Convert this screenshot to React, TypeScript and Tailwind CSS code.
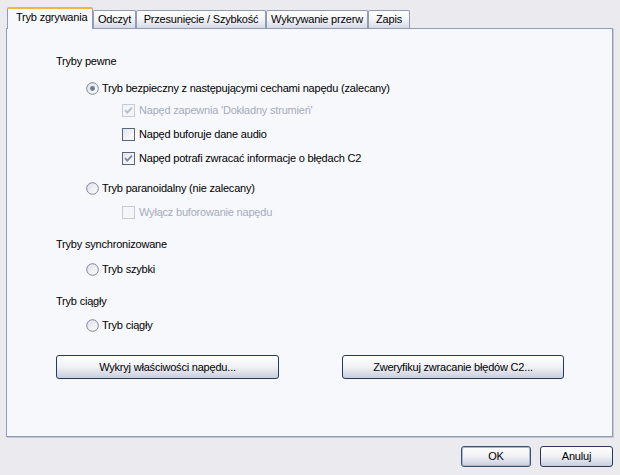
import React from "react";

function Radio({ checked }: { checked?: boolean }) {
  return (
    <svg width="13" height="13" viewBox="0 0 13 13" className="shrink-0">
      <defs>
        <linearGradient id="rg" x1="0" y1="0" x2="1" y2="1">
          <stop offset="0" stopColor="#dcdee6" />
          <stop offset="1" stopColor="#ffffff" />
        </linearGradient>
      </defs>
      <circle cx="6.5" cy="6.5" r="5.8" fill="url(#rg)" stroke="#7b8699" strokeWidth="1" />
      {checked && <circle cx="6.5" cy="6.5" r="2.4" fill="#6e7a8e" />}
    </svg>
  );
}

function Check({ checked, disabled }: { checked?: boolean; disabled?: boolean }) {
  const border = disabled ? "#c3cad8" : "#566680";
  const mark = disabled ? "#b6bdcb" : "#7d889e";
  return (
    <svg width="13" height="13" viewBox="0 0 13 13" className="shrink-0">
      <defs>
        <linearGradient id="cg" x1="0" y1="0" x2="1" y2="1">
          <stop offset="0" stopColor="#e2e4ec" />
          <stop offset="1" stopColor="#ffffff" />
        </linearGradient>
      </defs>
      <rect x="0.5" y="0.5" width="12" height="12" fill={disabled ? "#f4f5f9" : "url(#cg)"} stroke={border} />
      {checked && (
        <path d="M3 6.2l2.3 2.4 4.7-5" fill="none" stroke={mark} strokeWidth="1.8" />
      )}
    </svg>
  );
}

function Btn({ label, w, primary }: { label: string; w: string; primary?: boolean }) {
  return (
    <div
      className={`${w} flex items-center justify-center rounded-[3px] border ${
        primary ? "border-[#3c5274] shadow-[inset_0_0_0_1px_#a9b7cf]" : "border-[#263a5a]"
      } bg-gradient-to-b from-[#ffffff] via-[#f0f1f5] to-[#c9cede] text-black`}
    >
      {label}
    </div>
  );
}

export default function App() {
  const tabs = [
    { t: "Odczyt", w: "w-[43px]" },
    { t: "Przesunięcie / Szybkość", w: "w-[130px]" },
    { t: "Wykrywanie przerw", w: "w-[102px]" },
    { t: "Zapis", w: "w-[42px]" },
  ];

  return (
    <div
      className="w-[620px] h-[475px] bg-[#ebeaee] text-[11px] leading-[13px] tracking-[-0.2px] text-black overflow-hidden"
      style={{ fontFamily: "Tahoma, 'Liberation Sans', Arial, sans-serif" }}
    >
      {/* tabs */}
      <div className="flex items-end pl-[7px] pt-[7px] h-[28px]">
        <div className="relative z-10 h-[22px] w-[86px] -mb-[1px] border-x border-[#919bb1] bg-[#f7f8fc] border-t-2 border-t-[#f0b640] rounded-t-[2px] pl-[8px] pt-[2px]">
          Tryb zgrywania
        </div>
        {tabs.map((x) => (
          <div
            key={x.t}
            className={`${x.w} h-[18px] pt-[2px] text-center whitespace-nowrap overflow-hidden border border-b-0 border-[#919bb1] rounded-t-[2px] bg-gradient-to-b from-[#ffffff] via-[#f3f4f8] to-[#d6dae6]`}
          >
            {x.t}
          </div>
        ))}
      </div>

      {/* panel */}
      <div className="ml-[6px] w-[607px] h-[409px] border border-[#919bb1] bg-[#f7f8fc] shadow-[1px_1px_0_#c3c8d6] pl-[49px] pt-[26px] flex flex-col">
        <div className="h-[13px]">Tryby pewne</div>

        <div className="mt-[14px] ml-[30px] flex items-center gap-[3px] h-[13px]">
          <Radio checked />
          <span>Tryb bezpieczny z następującymi cechami napędu (zalecany)</span>
        </div>
        <div className="mt-[9px] ml-[66px] flex items-center gap-[4px] h-[13px] text-[#a4acbd]">
          <Check checked disabled />
          <span>Napęd zapewnia 'Dokładny strumień'</span>
        </div>
        <div className="mt-[11px] ml-[66px] flex items-center gap-[4px] h-[13px]">
          <Check />
          <span>Napęd buforuje dane audio</span>
        </div>
        <div className="mt-[11px] ml-[66px] flex items-center gap-[4px] h-[13px]">
          <Check checked />
          <span>Napęd potrafi zwracać informacje o błędach C2</span>
        </div>

        <div className="mt-[17px] ml-[30px] flex items-center gap-[3px] h-[13px]">
          <Radio />
          <span>Tryb paranoidalny (nie zalecany)</span>
        </div>
        <div className="mt-[11px] ml-[66px] flex items-center gap-[4px] h-[13px] text-[#a4acbd]">
          <Check disabled />
          <span>Wyłącz buforowanie napędu</span>
        </div>

        <div className="mt-[19px] h-[13px]">Tryby synchronizowane</div>
        <div className="mt-[12px] ml-[30px] flex items-center gap-[3px] h-[13px]">
          <Radio />
          <span>Tryb szybki</span>
        </div>

        <div className="mt-[19px] h-[13px]">Tryb ciągły</div>
        <div className="mt-[11px] ml-[30px] flex items-center gap-[3px] h-[13px]">
          <Radio />
          <span>Tryb ciągły</span>
        </div>

        <div className="mt-[23px] flex h-[24px]">
          <Btn label="Wykryj właściwości napędu..." w="w-[223px]" />
          <div className="ml-[63px] flex">
            <Btn label="Zweryfikuj zwracanie błędów C2..." w="w-[222px]" />
          </div>
        </div>
      </div>

      {/* footer buttons */}
      <div className="flex justify-end pr-[7px] pt-[9px] h-[21px] gap-[9px] box-content">
        <Btn label="OK" w="w-[70px]" primary />
        <Btn label="Anuluj" w="w-[73px]" />
      </div>
    </div>
  );
}
